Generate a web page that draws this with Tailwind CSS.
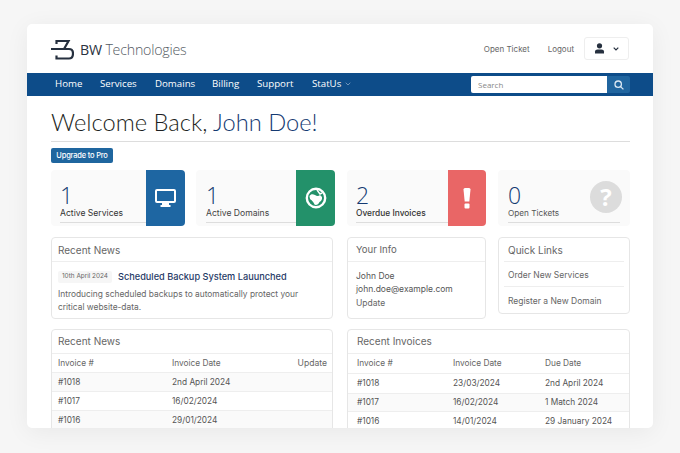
<!DOCTYPE html>
<html><head><meta charset="utf-8">
<script src="https://cdn.jsdelivr.net/npm/@tailwindcss/browser@4"></script>
</head>
<body class="m-0 h-[453px] w-[680px] overflow-hidden bg-[#f6f6f6] font-['Inter',sans-serif]">
<div class="px-[27px] pt-[24px]">
<div class="h-[404px] w-[626px] overflow-hidden rounded-[5px] bg-white shadow-[0_4px_24px_rgba(0,0,0,0.06)]">
  <header class="flex h-[49px] items-center justify-between pl-[24px] pr-[24px]">
    <div class="mt-[3px] flex items-center gap-[6px]">
      <svg width="23" height="22" viewBox="0 0 23 22" fill="none" stroke="#26303f" stroke-width="2.200">
        <path d="M5.500 5V2H17.500L13 10"/><path d="M0 10H18Q22 10 22 14.500Q22 19.500 18 19.500H5.500V16.500"/>
      </svg>
      <span class="font-['Open_Sans'] text-[14.200px] leading-none tracking-[-0.2px] text-[#555b63]"><span class="text-[#2a3240]">BW</span> <span class="font-light">Technologies</span></span>
    </div>
    <div class="flex items-center text-[8px] text-[#666]">
      <span class="mr-[18px]">Open Ticket</span>
      <span class="mr-[10px]">Logout</span>
      <div class="flex h-[23px] w-[45px] items-center justify-center gap-[8px] rounded-[3px] border border-[#eee] bg-white">
        <svg width="11" height="11" viewBox="0 0 11 11" fill="#26303f"><circle cx="5.500" cy="2.800" r="2.600"/><path d="M1 10.500V8.500Q1 6.400 3.500 6.400H7.500Q10 6.400 10 8.500V10.500Z"/></svg>
        <svg width="6" height="4" viewBox="0 0 6 4" fill="none" stroke="#26303f" stroke-width="1.200"><path d="M.7.7 3 3 5.300.7"/></svg>
      </div>
    </div>
  </header>
  <nav class="flex h-[23px] items-center justify-between bg-[#0d4c89] pl-[28px] pr-[23px] font-['Open_Sans'] text-[9.700px] text-white">
    <div class="flex items-center">
      <span class="w-[45px]">Home</span>
      <span class="w-[55px]">Services</span>
      <span class="w-[57px]">Domains</span>
      <span class="w-[45px]">Billing</span>
      <span class="w-[55px]">Support</span>
      <span class="mr-[4px]">StatUs</span>
      <svg width="6" height="4" viewBox="0 0 6 4" fill="none" stroke="#6d94bb" stroke-width="1"><path d="M.7.7 3 3 5.300.7"/></svg>
    </div>
    <div class="flex h-[17px] items-center">
      <div class="flex h-[17px] w-[136px] items-center rounded-l-[2px] bg-white pl-[7px] text-[8px] text-[#888]">Search</div>
      <div class="flex h-[17px] w-[23px] items-center justify-center rounded-r-[2px] bg-[#20659f]">
        <svg width="10" height="10" viewBox="0 0 10 10" fill="none" stroke="#dbe8f3" stroke-width="1.300"><circle cx="4.200" cy="4.200" r="3.200"/><path d="M6.600 6.600 9.400 9.400"/></svg>
      </div>
    </div>
  </nav>
  <main class="pl-[24px] pr-[23px]">
    <h1 class="mt-[11px] h-[35px] border-b border-[#ddd] font-['Lato'] text-[23.700px] font-light leading-[31px] text-[#1d1f22]">Welcome Back, <span class="text-[#143a72]">John Doe!</span></h1>
    <div class="mt-[6px] flex h-[15px] w-[62px] items-center justify-center rounded-[2px] bg-[#1f669f] text-[7.500px] font-medium tracking-[-0.2px] text-white">Upgrade to Pro</div>

    <div class="mt-[7px] flex h-[56px]">
      <div class="flex w-[134px] rounded-[4px] bg-[#fafafa]">
        <div class="flex-1 pl-[9px] pt-[13px]">
          <div class="font-['Open_Sans'] text-[23px] font-light leading-[25px] text-[#143a72]">1</div>
          <div class="h-[15px] border-b border-[#ddd] text-[8.600px] leading-[11px] text-[#333]">Active Services</div>
        </div>
        <div class="flex w-[39px] items-center justify-center rounded-r-[4px] bg-[#1e66a2]">
          <svg width="21" height="19" viewBox="0 0 21 19" fill="none"><rect x="1" y="1" width="19" height="12" rx="1" stroke="#fff" stroke-width="2"/><path d="M7 14H14V16H15.500V18H5.500V16H7Z" fill="#fff"/></svg>
        </div>
      </div>
      <div class="ml-[11px] flex w-[139px] rounded-[4px] bg-[#fafafa]">
        <div class="flex-1 pl-[10px] pt-[13px]">
          <div class="font-['Open_Sans'] text-[23px] font-light leading-[25px] text-[#143a72]">1</div>
          <div class="h-[15px] border-b border-[#ddd] text-[8.600px] leading-[11px] text-[#444]">Active Domains</div>
        </div>
        <div class="flex w-[39px] items-center justify-center rounded-r-[4px] bg-[#23916a]">
          <svg width="22" height="22" viewBox="0 0 22 22"><circle cx="11" cy="11" r="9.200" fill="#23916a" stroke="#fff" stroke-width="2.400"/><path d="M4.500 9C6 6.500 8 7 10 8 12 9.500 14 9 15 8L17 10C17.500 13 15.500 14.500 14.500 15 13.500 17.500 11 18.500 9.500 17.500 8.500 15 7 13.500 5.500 12.500 4.800 11.500 4.500 10 4.500 9Z" fill="#fff"/><path d="M12 3 15 7 17 6" fill="none" stroke="#fff" stroke-width="1.400"/></svg>
        </div>
      </div>
      <div class="ml-[12px] flex w-[139px] rounded-[4px] bg-[#fafafa]">
        <div class="flex-1 pl-[9px] pt-[13px]">
          <div class="font-['Open_Sans'] text-[23px] font-light leading-[25px] text-[#143a72]">2</div>
          <div class="h-[15px] border-b border-[#ddd] text-[8.400px] font-medium leading-[11px] text-[#333]">Overdue Invoices</div>
        </div>
        <div class="flex w-[38px] items-center justify-center rounded-r-[4px] bg-[#e96666]">
          <svg width="8" height="21" viewBox="0 0 8 21" fill="#fff"><path d="M.5 1.500Q.5 0 2 0H6Q7.500 0 7.500 1.500L6.300 13.500H1.700Z"/><rect x="1.500" y="15.500" width="5" height="5" rx="1"/></svg>
        </div>
      </div>
      <div class="ml-[12px] flex w-[132px] rounded-[4px] bg-[#fafafa] pl-[10px] pr-[10px]">
        <div class="relative flex-1 pt-[13px]">
          <div class="font-['Open_Sans'] text-[23px] font-light leading-[25px] text-[#143a72]">0</div>
          <div class="h-[15px] border-b border-[#ddd] text-[8.200px] leading-[11px] text-[#555]">Open Tickets</div>
          <div class="absolute right-[-2px] top-[11px] flex h-[32px] w-[32px] items-center justify-center rounded-full bg-[#dcdcdc] font-['Open_Sans'] text-[24px] font-bold leading-none text-white">?</div>
        </div>
      </div>
    </div>

    <div class="mt-[11px] flex items-start">
      <section class="h-[82px] w-[282px] rounded-[4px] border border-[#e6e6e6]">
        <div class="flex h-[24px] items-center border-b border-[#eee] pl-[6px] pt-[1px] text-[10px] text-[#666]">Recent News</div>
        <div class="pl-[6px] pt-[8px]">
          <div class="flex items-center">
            <span class="flex h-[12px] items-center rounded-[2px] bg-[#f6f6f6] px-[4px] text-[6.400px] text-[#666]">10th April 2024</span>
            <span class="ml-[6px] text-[9.200px] font-medium text-[#1f3a66]">Scheduled Backup System Lauunched</span>
          </div>
          <p class="mt-[4px] text-[8.400px] leading-[13px] text-[#666]">Introducing scheduled backups to automatically protect your<br>critical website-data.</p>
        </div>
      </section>
      <section class="ml-[14px] h-[82px] w-[139px] rounded-[4px] border border-[#e6e6e6]">
        <div class="flex h-[24px] items-center border-b border-[#eee] pl-[8px] pt-[1px] text-[9.600px] text-[#666]">Your Info</div>
        <div class="pl-[8px] pt-[8px] text-[8.500px] leading-[12.500px] text-[#555]">John Doe<br>john.doe@example.com<div class="mt-[2px] text-[#666]">Update</div></div>
      </section>
      <section class="ml-[12px] h-[77px] w-[132px] rounded-[4px] border border-[#e6e6e6] px-[5px]">
        <div class="flex h-[24px] items-center border-b border-[#eee] pl-[4px] pt-[1px] text-[10px] text-[#666]">Quick Links</div>
        <div class="flex h-[25px] items-center border-b border-[#eee] pl-[4px] pt-[2px] text-[8.500px] text-[#666]">Order New Services</div>
        <div class="flex h-[25px] items-center pl-[4px] pt-[3px] text-[8.500px] text-[#666]">Register a New Domain</div>
      </section>
    </div>

    <div class="mt-[10px] flex gap-[14px]">
      <section class="h-[120px] w-[282px] rounded-[4px] border border-[#e6e6e6]">
        <div class="flex h-[24px] items-center border-b border-[#eee] pl-[6px] text-[10px] text-[#666]">Recent News</div>
        <div class="grid h-[19px] grid-cols-[114px_1fr_auto] items-center border-b border-[#eee] pl-[6px] pr-[5px] text-[8.300px] text-[#666]"><span>Invoice #</span><span>Invoice Date</span><span class="text-[8.600px]">Update</span></div>
        <div class="grid h-[19px] grid-cols-[114px_1fr] items-center border-b border-[#eee] bg-[#fafafa] pl-[6px] text-[8.300px] text-[#555]"><span>#1018</span><span>2nd April 2024</span></div>
        <div class="grid h-[19px] grid-cols-[114px_1fr] items-center border-b border-[#eee] pl-[6px] text-[8.300px] text-[#555]"><span>#1017</span><span>16/02/2024</span></div>
        <div class="grid h-[19px] grid-cols-[114px_1fr] items-center bg-[#fafafa] pl-[6px] text-[8.300px] text-[#555]"><span>#1016</span><span>29/01/2024</span></div>
      </section>
      <section class="h-[120px] w-[283px] rounded-[4px] border border-[#e6e6e6]">
        <div class="flex h-[24px] items-center border-b border-[#eee] pl-[9px] text-[10px] text-[#666]">Recent Invoices</div>
        <div class="grid h-[20px] grid-cols-[96px_92px_1fr] items-center border-b border-[#eee] pl-[9px] text-[8.300px] text-[#666]"><span>Invoice #</span><span>Invoice Date</span><span>Due Date</span></div>
        <div class="grid h-[20px] grid-cols-[96px_92px_1fr] items-center border-b border-[#eee] pl-[9px] text-[8.300px] text-[#555]"><span>#1018</span><span>23/03/2024</span><span>2nd April 2024</span></div>
        <div class="grid h-[18px] grid-cols-[96px_92px_1fr] items-center border-b border-[#eee] bg-[#fafafa] pl-[9px] text-[8.300px] text-[#555]"><span>#1017</span><span>16/02/2024</span><span>1 Match 2024</span></div>
        <div class="grid h-[18px] grid-cols-[96px_92px_1fr] items-center pl-[9px] text-[8.300px] text-[#555]"><span>#1016</span><span>14/01/2024</span><span>29 January 2024</span></div>
      </section>
    </div>
  </main>
</div>
</div>
</body></html>
